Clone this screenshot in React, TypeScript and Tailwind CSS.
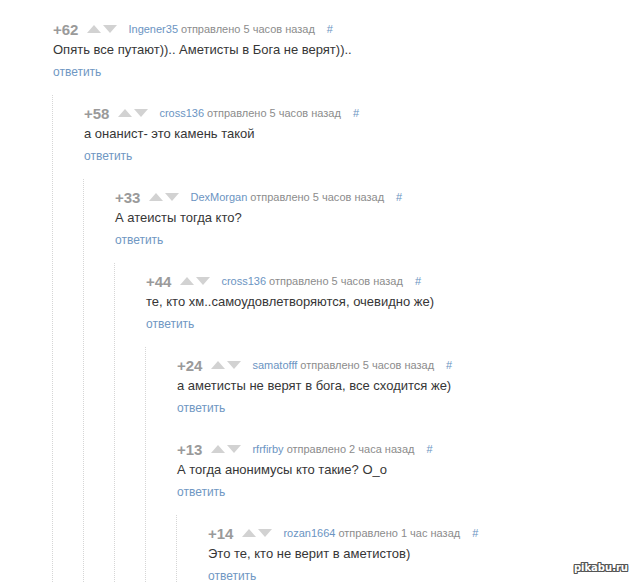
import React from "react";

type C = {
  score: string;
  user: string;
  time: string;
  text: string;
  children?: C[];
};

const data: C[] = [
  {
    score: "+62",
    user: "Ingener35",
    time: "5 часов назад",
    text: "Опять все путают)).. Аметисты в Бога не верят))..",
    children: [
      {
        score: "+58",
        user: "cross136",
        time: "5 часов назад",
        text: "а онанист- это камень такой",
        children: [
          {
            score: "+33",
            user: "DexMorgan",
            time: "5 часов назад",
            text: "А атеисты тогда кто?",
            children: [
              {
                score: "+44",
                user: "cross136",
                time: "5 часов назад",
                text: "те, кто хм..самоудовлетворяются, очевидно же)",
                children: [
                  {
                    score: "+24",
                    user: "samatofff",
                    time: "5 часов назад",
                    text: "а аметисты не верят в бога, все сходится же)",
                  },
                  {
                    score: "+13",
                    user: "rfrfirby",
                    time: "2 часа назад",
                    text: "А тогда анонимусы кто такие? О_о",
                    children: [
                      {
                        score: "+14",
                        user: "rozan1664",
                        time: "1 час назад",
                        text: "Это те, кто не верит в аметистов)",
                      },
                    ],
                  },
                ],
              },
            ],
          },
        ],
      },
    ],
  },
];

function Arrows() {
  return (
    <div className="flex items-center gap-[2px] ml-[9px] mr-[11px]">
      <svg width="14" height="8" viewBox="0 0 14 8">
        <polygon points="0,8 7,0 14,8" fill="#d2d2d2" />
      </svg>
      <svg width="14" height="8" viewBox="0 0 14 8">
        <polygon points="0,0 14,0 7,8" fill="#d2d2d2" />
      </svg>
    </div>
  );
}

function Comment({ c }: { c: C }) {
  return (
    <div className="flex flex-col">
      <div className="pt-[9px] flex flex-col">
        <div className="h-[18px] flex items-center whitespace-nowrap">
          <span className="text-[15px] font-bold text-[#9a9a9a] leading-none">{c.score}</span>
          <Arrows />
          <span className="text-[11px] text-[#6b94c2] leading-none">{c.user}</span>
          <span className="text-[11px] text-[#8c8c8c] leading-none ml-[3px]">отправлено {c.time}</span>
          <span className="text-[11px] text-[#6b94c2] leading-none ml-[12px]">#</span>
        </div>
        <div className="h-[24px] flex items-center text-[13px] text-[#363636] whitespace-nowrap">
          {c.text}
        </div>
        <div className="h-[20px] flex items-center text-[12px] text-[#6f97c3]">ответить</div>
      </div>
      {c.children && c.children.length > 0 && (
        <div className="mt-[13px] ml-[-1px] border-l border-dotted border-[#d6d6d6] pl-[31px] flex flex-col gap-[13px]">
          {c.children.map((ch, i) => (
            <Comment key={i} c={ch} />
          ))}
        </div>
      )}
    </div>
  );
}

export default function App() {
  return (
    <div
      className="relative w-[633px] h-[582px] overflow-hidden bg-white pl-[53px] pt-[11px]"
      style={{ fontFamily: '"Liberation Sans", Arial, sans-serif' }}
    >
      {data.map((c, i) => (
        <Comment key={i} c={c} />
      ))}
      <div
        className="absolute right-[5px] bottom-[9px] text-[10px] font-bold text-white leading-none"
        style={{
          fontFamily: '"DejaVu Sans", sans-serif',
          textShadow:
            "1px 0 0 #555, -1px 0 0 #555, 0 1px 0 #555, 0 -1px 0 #555, 1px 1px 0 #555, -1px -1px 0 #555, 1px -1px 0 #555, -1px 1px 0 #555",
        }}
      >
        pikabu.ru
      </div>
    </div>
  );
}
